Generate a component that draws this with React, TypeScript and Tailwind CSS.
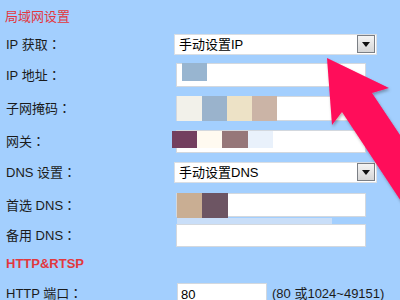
import React from 'react';

const font = { fontFamily: '"Liberation Sans", "Noto Sans CJK SC", sans-serif' };
const colonFont = { fontFamily: '"Noto Sans CJK TC", sans-serif' };

interface Block {
  left: number;
  width: number;
  top: number;
  height: number;
  color: string;
}

// mosaic patches that hide the real addresses
const Mosaic: React.FC<{ blocks: Block[] }> = ({ blocks }) => (
  <>
    {blocks.map((b, i) => (
      <div
        key={i}
        className="absolute"
        style={{ left: b.left, top: b.top, width: b.width, height: b.height, background: b.color }}
      />
    ))}
  </>
);

const Select: React.FC<{ value: string }> = ({ value }) => (
  <div className="ml-[174px] flex h-[21px] w-[203px] items-center border border-[#d9dee4] bg-white pl-1 text-[13px] text-black">
    <span className="flex-1 leading-none">{value}</span>
    <div className="mr-[1px] flex h-[18px] w-[18px] items-center justify-center border border-[#7b7f85] bg-gradient-to-b from-[#f4f4f4] to-[#d6d6d6]">
      <svg width="8" height="5" viewBox="0 0 8 5">
        <path d="M0 0h8L4 5z" fill="#111" />
      </svg>
    </div>
  </div>
);

const Row: React.FC<{ label: string; h: string; children?: React.ReactNode }> = ({ label, h, children }) => (
  <div className={`relative flex items-center ${h}`}>
    <span className="absolute left-[6px] text-[13px] text-[#1b1b1b]">
      {label}
      <span style={colonFont}>：</span>
    </span>
    {children}
  </div>
);

const inputCls = 'relative ml-[176px] w-[190px] border border-[#d3d8de] bg-white';

export default function App() {
  return (
    <div className="relative h-[300px] w-[400px] overflow-hidden bg-[#a3cffe]" style={font}>
      <div className="flex flex-col pt-[4px]">
        <div className="flex h-[26px] items-center pl-[5px] text-[13px] text-[#e2383e]">局域网设置</div>

        <Row label="IP 获取" h="h-[28px]">
          <Select value="手动设置IP" />
        </Row>

        <Row label="IP 地址" h="h-[34px]">
          <div className={`${inputCls} h-[24px]`}>
            <Mosaic blocks={[{ left: 5, top: -1, width: 25, height: 18, color: '#98b5d0' }]} />
          </div>
        </Row>

        <Row label="子网掩码" h="h-[32px]">
          <div className={`${inputCls} h-[25px]`}>
            <Mosaic
              blocks={[
                { left: 0, top: -1, width: 25, height: 25, color: '#f2f1ea' },
                { left: 25, top: -1, width: 25, height: 25, color: '#9ab3cc' },
                { left: 50, top: -1, width: 25, height: 25, color: '#ede2c6' },
                { left: 75, top: -1, width: 25, height: 25, color: '#cbb4a6' },
              ]}
            />
          </div>
        </Row>

        <Row label="网关" h="h-[34px]">
          <div className={`${inputCls} h-[23px]`}>
            <Mosaic
              blocks={[
                { left: -5, top: 0, width: 25, height: 17, color: '#733f5f' },
                { left: 20, top: 0, width: 25, height: 17, color: '#fffaf0' },
                { left: 45, top: 0, width: 26, height: 17, color: '#967779' },
                { left: 71, top: 0, width: 25, height: 17, color: '#e9f1fb' },
              ]}
            />
          </div>
        </Row>

        <Row label="DNS 设置" h="h-[28px]">
          <Select value="手动设置DNS" />
        </Row>

        <Row label="首选 DNS" h="h-[38px]">
          <div className={`${inputCls} h-[24px]`}>
            <Mosaic
              blocks={[
                { left: 0, top: -1, width: 25, height: 25, color: '#c9ae93' },
                { left: 25, top: -1, width: 26, height: 25, color: '#6d5563' },
                { left: 0, top: 24, width: 155, height: 7, color: '#c9def8' },
              ]}
            />
          </div>
        </Row>

        <Row label="备用 DNS" h="h-[22px]">
          <div className={`${inputCls} h-[23px]`} />
        </Row>

        <div className="flex h-[36px] items-center pl-[6px] text-[13px] font-bold text-[#e2383e]">HTTP&amp;RTSP</div>

        <Row label="HTTP 端口" h="h-[22px]">
          <div className="ml-[177px] mt-[4px] flex h-[24px] w-[90px] items-center border border-[#d3d8de] bg-white pl-[3px] text-[13px] text-black">
            80
          </div>
          <span className="ml-[5px] mt-[1px] text-[13px] text-[#1b1b1b]">(80 或1024~49151)</span>
        </Row>
      </div>

      {/* red pointer arrow */}
      <svg className="pointer-events-none absolute left-0 top-0" width="400" height="300" viewBox="0 0 400 300">
        <defs>
          <filter id="sh" x="-20%" y="-20%" width="140%" height="140%">
            <feDropShadow dx="1" dy="2" stdDeviation="1.5" floodColor="#000" floodOpacity="0.3" />
          </filter>
        </defs>
        <polygon
          points="327,58 389,88 372,93 420,165 420,230 342,112 332,125"
          fill="#ff0a5a"
          filter="url(#sh)"
        />
      </svg>
    </div>
  );
}
